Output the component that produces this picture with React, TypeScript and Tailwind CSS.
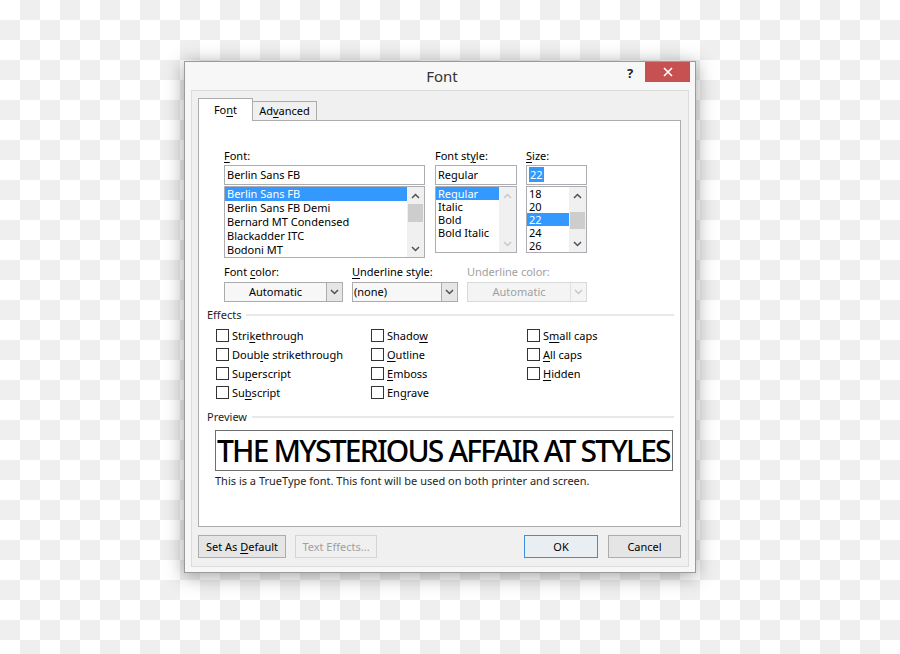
import React from "react";

const U = ({ children }: { children: React.ReactNode }) => (
  <span className="underline decoration-[1px] underline-offset-[2px]">{children}</span>
);

function Chevron({ up, disabled }: { up?: boolean; disabled?: boolean }) {
  return (
    <svg width="9" height="6" viewBox="0 0 9 6">
      <polyline
        points={up ? "1,5 4.5,1.5 8,5" : "1,1 4.5,4.5 8,1"}
        fill="none"
        stroke={disabled ? "#c8c8c8" : "#505050"}
        strokeWidth="1.5"
      />
    </svg>
  );
}

function Scroll({ thumbTop, thumbH, disabled }: { thumbTop: number; thumbH: number; disabled?: boolean }) {
  return (
    <div className="w-[17px] h-full shrink-0 bg-[#f0f0f0] flex flex-col">
      <div className="h-[17px] flex items-center justify-center">
        <Chevron up disabled={disabled} />
      </div>
      <div className="flex-1 relative">
        {!disabled && (
          <div
            className="absolute left-[1px] right-[1px] bg-[#cdcdcd]"
            style={{ top: thumbTop, height: thumbH }}
          />
        )}
      </div>
      <div className="h-[17px] flex items-center justify-center">
        <Chevron disabled={disabled} />
      </div>
    </div>
  );
}

function ListBox({
  items,
  selected,
  w,
  h,
  rowH,
  thumbTop,
  thumbH,
  disabled,
}: {
  items: string[];
  selected: number;
  w: string;
  h: string;
  rowH: string;
  thumbTop: number;
  thumbH: number;
  disabled?: boolean;
}) {
  return (
    <div className={`${w} ${h} mt-[1px] border border-[#abadb3] bg-white flex overflow-hidden`}>
      <div className="flex-1 min-w-0 flex flex-col overflow-hidden">
        {items.map((it, i) => (
          <div
            key={it}
            className={`${rowH} shrink-0 pl-[2px] whitespace-nowrap ${
              i === selected ? "bg-[#3399ff] text-white" : "text-black"
            }`}
          >
            {it}
          </div>
        ))}
      </div>
      <Scroll thumbTop={thumbTop} thumbH={thumbH} disabled={disabled} />
    </div>
  );
}

function Select({
  w,
  text,
  center,
  disabled,
}: {
  w: string;
  text: string;
  center?: boolean;
  disabled?: boolean;
}) {
  return (
    <div
      className={`${w} h-[20px] mt-[2px] flex border ${
        disabled ? "border-[#d9d9d9] bg-[#f4f4f4] text-[#a0a0a0]" : "border-[#acacac] bg-[#f7f7f7] text-black"
      }`}
    >
      <div className={`flex-1 leading-[18px] ${center ? "text-center" : "pl-[1px]"}`}>{text}</div>
      <div
        className={`w-[16px] flex items-center justify-center border-l ${
          disabled ? "border-[#e0e0e0] bg-[#f4f4f4]" : "border-[#acacac] bg-[#e6e6e6]"
        }`}
      >
        <Chevron disabled={disabled} />
      </div>
    </div>
  );
}

function Check({ children }: { children: React.ReactNode }) {
  return (
    <div className="h-[19px] flex items-center">
      <div className="w-[13px] h-[13px] shrink-0 border border-[#333333] bg-white mr-[3px]" />
      <span className="leading-[16px] whitespace-nowrap">{children}</span>
    </div>
  );
}

function Heading({ children }: { children: React.ReactNode }) {
  return (
    <div className="flex items-center h-[16px] pl-[8px] pr-[6px]">
      <span className="leading-[16px] text-[#1e1e1e]">{children}</span>
      <div className="flex-1 h-[2px] bg-[#e8e8e8] ml-[5px]" />
    </div>
  );
}

function Btn({
  children,
  w,
  ok,
  disabled,
}: {
  children: React.ReactNode;
  w: string;
  ok?: boolean;
  disabled?: boolean;
}) {
  return (
    <div
      className={`${w} h-[23px] flex items-center justify-center border leading-[16px] ${
        ok
          ? "border-[#3c8fe0] bg-[#e9eef3] text-black"
          : disabled
          ? "border-[#d5d5d5] bg-[#f0f0f0] text-[#a0a0a0]"
          : "border-[#adadad] bg-[#e5e5e5] text-black"
      }`}
    >
      <span className="whitespace-pre">{children}</span>
    </div>
  );
}

export default function App() {
  return (
    <div
      className="w-[900px] h-[654px] overflow-hidden bg-[conic-gradient(#efefef_25%,#ffffff_0_50%,#efefef_0_75%,#ffffff_0)] bg-[length:40px_40px] pl-[184px] pt-[61px] text-[11px] text-black"
      style={{ fontFamily: '"Noto Sans", "Open Sans", sans-serif' }}
    >
      <div className="w-[512px] h-[512px] border border-[#9b9b9b] bg-[#f7f7f7] shadow-[0_3px_18px_rgba(0,0,0,0.38)] flex flex-col">
        {/* title bar */}
        <div className="h-[28px] flex items-start">
          <div className="flex-1 text-center text-[15px] leading-[28px] text-[#333] pl-[76px]">Font</div>
          <div className="w-[14px] text-center font-bold text-[13px] leading-[22px] text-[#222] mr-[8px]">?</div>
          <div className="w-[45px] h-[20px] bg-[#c75050] flex items-center justify-center mr-[5px]">
            <svg width="10" height="10" viewBox="0 0 10 10">
              <path d="M1 1 L9 9 M9 1 L1 9" stroke="white" strokeWidth="1.6" />
            </svg>
          </div>
        </div>
        {/* body */}
        <div className="flex-1 min-h-0 px-[6px] pb-[5px] flex">
          <div className="flex-1 min-w-0 border border-[#dcdcdc] bg-[#f0f0f0] pt-[7px] pl-[6px] pr-[7px] pb-[8px] flex flex-col">
            {/* tabs */}
            <div className="flex items-end h-[22px]">
              <div className="w-[55px] h-[23px] bg-white border border-b-0 border-[#acacac] relative z-10 mb-[-1px] flex items-center justify-center leading-[16px]">
                <span>
                  Fo<U>n</U>t
                </span>
              </div>
              <div className="w-[64px] h-[19px] bg-[#f0f0f0] border border-l-0 border-b-0 border-[#acacac] flex items-center justify-center leading-[16px]">
                <span>
                  Ad<U>v</U>anced
                </span>
              </div>
            </div>
            {/* panel */}
            <div className="h-[407px] min-w-0 overflow-hidden border border-[#acacac] bg-white flex flex-col">
              {/* top lists */}
              <div className="flex items-start pl-[25px] mt-[27px]">
                <div className="w-[201px]">
                  <div className="h-[16px] leading-[16px]">
                    <U>F</U>ont:
                  </div>
                  <div className="h-[20px] mt-[1px] border border-[#abadb3] bg-white leading-[18px] pl-[2px]">
                    Berlin Sans FB
                  </div>
                  <ListBox
                    w="w-[201px]"
                    h="h-[72px]"
                    rowH="h-[14px] leading-[14px]"
                    items={["Berlin Sans FB", "Berlin Sans FB Demi", "Bernard MT Condensed", "Blackadder ITC", "Bodoni MT"]}
                    selected={0}
                    thumbTop={0}
                    thumbH={18}
                  />
                </div>
                <div className="w-[82px] ml-[10px]">
                  <div className="h-[16px] leading-[16px]">
                    Font st<U>y</U>le:
                  </div>
                  <div className="h-[20px] mt-[1px] border border-[#abadb3] bg-white leading-[18px] pl-[2px]">
                    Regular
                  </div>
                  <ListBox
                    w="w-[82px]"
                    h="h-[67px]"
                    rowH="h-[13px] leading-[13px]"
                    items={["Regular", "Italic", "Bold", "Bold Italic"]}
                    selected={0}
                    thumbTop={0}
                    thumbH={0}
                    disabled
                  />
                </div>
                <div className="w-[61px] ml-[9px]">
                  <div className="h-[16px] leading-[16px]">
                    <U>S</U>ize:
                  </div>
                  <div className="h-[20px] mt-[1px] border border-[#abadb3] bg-white leading-[18px] pl-[2px]">
                    <span className="bg-[#3399ff] text-white px-[1px]">22</span>
                  </div>
                  <ListBox
                    w="w-[61px]"
                    h="h-[67px]"
                    rowH="h-[13px] leading-[13px]"
                    items={["18", "20", "22", "24", "26"]}
                    selected={2}
                    thumbTop={8}
                    thumbH={17}
                  />
                </div>
              </div>
              {/* selects */}
              <div className="flex items-start pl-[25px] mt-[6px]">
                <div className="w-[119px]">
                  <div className="h-[16px] leading-[16px]">
                    Font <U>c</U>olor:
                  </div>
                  <Select w="w-[119px]" text="Automatic" center />
                </div>
                <div className="w-[106px] ml-[9px]">
                  <div className="h-[16px] leading-[16px]">
                    <U>U</U>nderline style:
                  </div>
                  <Select w="w-[106px]" text="(none)" />
                </div>
                <div className="w-[120px] ml-[9px]">
                  <div className="h-[16px] leading-[16px] text-[#a0a0a0]">Underline color:</div>
                  <Select w="w-[120px]" text="Automatic" center disabled />
                </div>
              </div>
              {/* effects */}
              <div className="mt-[5px]">
                <Heading>Effects</Heading>
              </div>
              <div className="flex pl-[17px] mt-[3px]">
                <div className="w-[155px] flex flex-col">
                  <Check>
                    Stri<U>k</U>ethrough
                  </Check>
                  <Check>
                    Doub<U>l</U>e strikethrough
                  </Check>
                  <Check>
                    Su<U>p</U>erscript
                  </Check>
                  <Check>
                    Su<U>b</U>script
                  </Check>
                </div>
                <div className="w-[156px] flex flex-col">
                  <Check>
                    Shado<U>w</U>
                  </Check>
                  <Check>
                    <U>O</U>utline
                  </Check>
                  <Check>
                    <U>E</U>mboss
                  </Check>
                  <Check>
                    En<U>g</U>rave
                  </Check>
                </div>
                <div className="flex flex-col">
                  <Check>
                    S<U>m</U>all caps
                  </Check>
                  <Check>
                    <U>A</U>ll caps
                  </Check>
                  <Check>
                    <U>H</U>idden
                  </Check>
                </div>
              </div>
              {/* preview */}
              <div className="mt-[7px]">
                <Heading>Preview</Heading>
              </div>
              <div className="ml-[16px] mr-[7px] mt-[5px] h-[41px] min-w-0 border border-[#6e6e6e] overflow-hidden flex items-center">
                <span className="whitespace-nowrap text-[30px] leading-[36px] font-medium tracking-[-1.8px] pl-[1px]">
                  THE MYSTERIOUS AFFAIR AT STYLES
                </span>
              </div>
              <div className="ml-[16px] mt-[2px] h-[16px] leading-[16px] text-[#1e1e1e] whitespace-nowrap">
                This is a TrueType font. This font will be used on both printer and screen.
              </div>
            </div>
            {/* buttons */}
            <div className="flex mt-[8px]">
              <Btn w="w-[88px]">
                Set As <U>D</U>efault
              </Btn>
              <div className="ml-[9px]">
                <Btn w="w-[82px]" disabled>
                  Text Effects...
                </Btn>
              </div>
              <div className="flex-1" />
              <Btn w="w-[74px]" ok>
                OK
              </Btn>
              <div className="ml-[10px]">
                <Btn w="w-[73px]">Cancel</Btn>
              </div>
            </div>
          </div>
        </div>
      </div>
    </div>
  );
}
